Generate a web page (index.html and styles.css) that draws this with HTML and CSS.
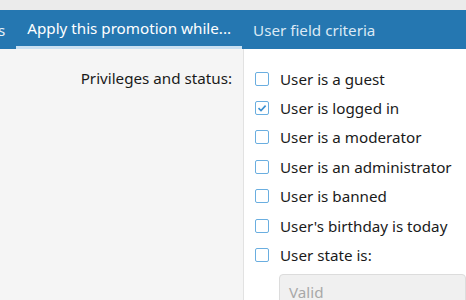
FILE: index.html
```html
<!DOCTYPE html>
<html lang="en">
<head>
    <meta charset="UTF-8">
    <title>Promotion criteria</title>
    <link rel="stylesheet" href="styles.css">
</head>
<body>
    <div class="topbar"></div>
    <div class="tabs">
        <span class="tab tab-cut">s</span>
        <span class="tab active">Apply this promotion while...</span>
        <span class="tab">User field criteria</span>
    </div>
    <div class="form">
        <div class="label-col">
            <label>Privileges and status:</label>
        </div>
        <div class="input-col">
            <ul class="checks">
                <li><span class="box"></span>User is a guest</li>
                <li><span class="box checked"><svg viewBox="0 0 14 14" width="14" height="14"><path d="M3.5 7.2 L6 9.6 L10.6 4.6" fill="none" stroke="#3b8fd0" stroke-width="1.6"/></svg></span>User is logged in</li>
                <li><span class="box"></span>User is a moderator</li>
                <li><span class="box"></span>User is an administrator</li>
                <li><span class="box"></span>User is banned</li>
                <li><span class="box"></span>User's birthday is today</li>
                <li><span class="box"></span>User state is:</li>
            </ul>
            <div class="select">Valid</div>
        </div>
    </div>
</body>
</html>
```

FILE: styles.css
```css
body {
    margin: 0;
    font-family: "Noto Sans", sans-serif;
    font-size: 15.2px;
    color: #1a1a1a;
    background-color: #fff;
    height: 300px;
    overflow: hidden;
}
.topbar {
    height: 10px;
    background-color: #ebebeb;
}
.tabs {
    display: flex;
    height: 39px;
    background-color: #2577b1;
    white-space: nowrap;
    overflow: hidden;
}
.tab {
    color: #dbe9f5;
    padding: 0 11px;
    line-height: 40px;
}
.tab-cut {
    margin-left: -2px;
    padding: 0 11px 0 0;
    color: #e8f1f8;
}
.tab.active {
    color: #fff;
    line-height: 37px;
    border-bottom: 3px solid #c9e0f2;
    box-sizing: border-box;
}
.form {
    display: flex;
    height: 251px;
}
.label-col {
    width: 244px;
    background-color: #f5f5f5;
    border-right: 1px solid #e2e2e2;
    text-align: right;
    box-sizing: border-box;
    padding: 15px 11px 0 0;
}
.label-col label {
    display: block;
    line-height: 29.4px;
}
.input-col {
    flex: 1;
    padding: 15px 0 0 11px;
}
.checks {
    list-style: none;
    margin: 0;
    padding: 0;
}
.checks li {
    display: flex;
    align-items: center;
    height: 29.4px;
    line-height: 20px;
}
.box {
    width: 14px;
    height: 14px;
    box-sizing: border-box;
    border: 1.5px solid #6aaee0;
    border-radius: 2px;
    margin-right: 11px;
    flex-shrink: 0;
    position: relative;
}
.box svg {
    position: absolute;
    left: -1.5px;
    top: -1.5px;
}
.select {
    margin: 4px 0 0 24px;
    height: 34px;
    background-color: #f0f0f0;
    border: 1px solid #dcdcdc;
    border-radius: 4px;
    padding-left: 9px;
    color: #a8a8a8;
    line-height: 34px;
}
```
